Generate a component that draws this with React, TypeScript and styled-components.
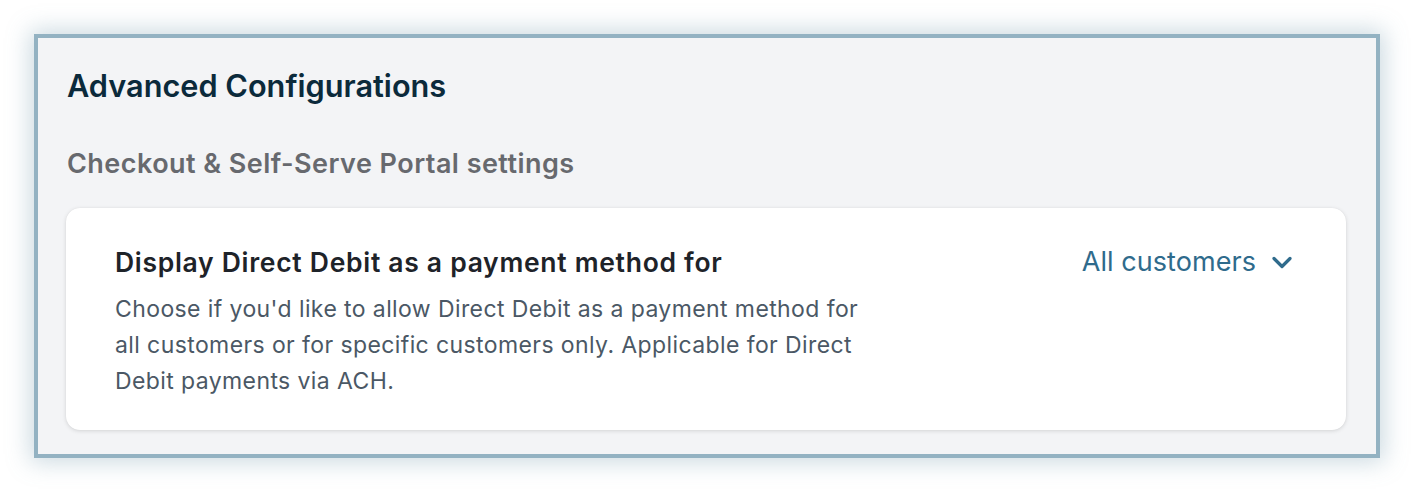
import React from "react";
import styled, { createGlobalStyle } from "styled-components";

const GlobalStyle = createGlobalStyle`
  html, body { margin: 0; padding: 0; background: #ffffff; }
  body { font-family: Inter, "Noto Sans", sans-serif; -webkit-font-smoothing: antialiased; }
  * { box-sizing: border-box; }
`;

const Page = styled.div`
  padding: 34px;
  width: 1414px;
  height: 492px;
`;

const Panel = styled.section`
  width: 1346px;
  height: 424px;
  background: #f3f4f6;
  border: 4px solid #93b2c2;
  box-shadow: 0 0 22px 4px rgba(110, 150, 170, 0.35);
  padding: 30px 30px 24px 28px;
  display: flex;
  flex-direction: column;
`;

const Title = styled.h2`
  margin: 0 0 0 1px;
  font-size: 30.7px;
  line-height: 36px;
  font-weight: 600;
  color: #0b2a3b;
`;

const Subtitle = styled.h3`
  margin: 44px 0 0 1px;
  font-size: 27px;
  line-height: 32px;
  font-weight: 600;
  letter-spacing: 0.45px;
  color: #67696e;
`;

const Card = styled.div`
  margin-top: 28px;
  background: #ffffff;
  border-radius: 14px;
  box-shadow: 0 1px 4px rgba(0, 0, 0, 0.13), 0 0 1px rgba(0, 0, 0, 0.08);
  padding: 39px 54px 20px 49px;
  display: flex;
  justify-content: space-between;
  align-items: flex-start;
  flex: 1;
`;

const Texts = styled.div`
  display: flex;
  flex-direction: column;
`;

const CardTitle = styled.div`
  font-size: 26.5px;
  line-height: 30px;
  font-weight: 600;
  letter-spacing: 0.7px;
  color: #1e2329;
`;

const Description = styled.p`
  margin: 14px 0 0 0;
  width: 770px;
  font-size: 23px;
  line-height: 36px;
  font-weight: 400;
  letter-spacing: 0.4px;
  color: #4b5865;
`;

const Select = styled.button`
  display: flex;
  align-items: center;
  gap: 16px;
  background: none;
  border: none;
  padding: 0;
  margin-top: -2px;
  font-family: inherit;
  font-size: 27px;
  line-height: 34px;
  font-weight: 400;
  letter-spacing: 0.05px;
  color: #2f6b8c;
  cursor: pointer;
`;

const Chevron = () => (
  <svg width="20" height="13" viewBox="0 0 20 13" fill="none">
    <path d="M2 2.5 L10 10.5 L18 2.5" stroke="#2f6b8c" strokeWidth="3.2" strokeLinecap="round" strokeLinejoin="round" />
  </svg>
);

export default function App() {
  return (
    <>
      <GlobalStyle />
      <Page>
        <Panel>
          <Title>Advanced Configurations</Title>
          <Subtitle>Checkout &amp; Self-Serve Portal settings</Subtitle>
          <Card>
            <Texts>
              <CardTitle>Display Direct Debit as a payment method for</CardTitle>
              <Description>
                Choose if you'd like to allow Direct Debit as a payment method for all customers or for specific
                customers only. Applicable for Direct Debit payments via ACH.
              </Description>
            </Texts>
            <Select>
              All customers
              <Chevron />
            </Select>
          </Card>
        </Panel>
      </Page>
    </>
  );
}
